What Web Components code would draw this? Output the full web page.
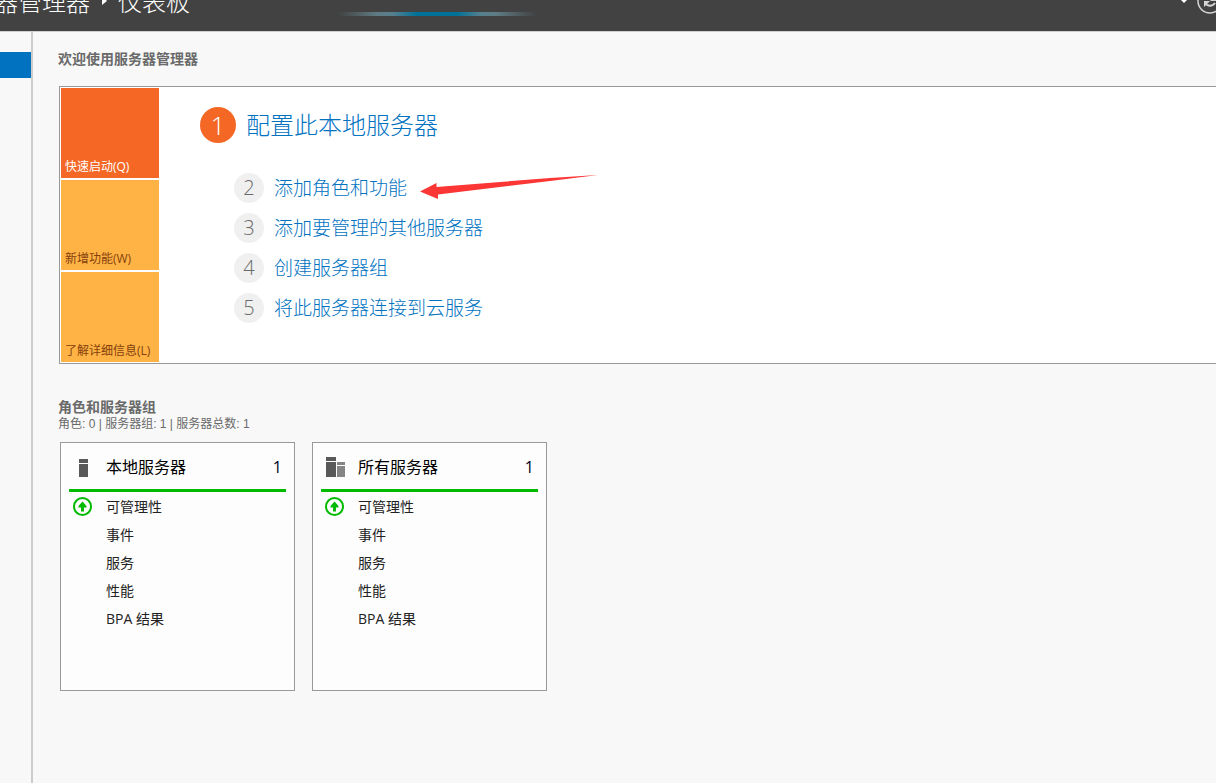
<!DOCTYPE html>
<html lang="zh-CN">
<head>
<meta charset="utf-8">
<title>服务器管理器</title>
<style>
html, body { height: 100%; margin: 0; }
body { font-family: "Open Sans", "Noto Sans CJK SC", sans-serif; background: #f8f8f8; overflow: hidden; }
</style>
</head>
<body>
<server-manager></server-manager>
<script>
function define(name, html, setup) {
  const template = document.createElement('template');
  template.innerHTML = html;
  customElements.define(name, class extends HTMLElement {
    constructor() {
      super();
      this.attachShadow({ mode: 'open' }).append(template.content.cloneNode(true));
    }
    connectedCallback() { if (setup) setup(this, this.shadowRoot); }
  });
}

define('app-header', `
<style>
:host { display: flex; justify-content: space-between; height: 32px; background: #424242; border-bottom: 1px solid #d0d0d0; box-sizing: border-box; overflow: hidden; position: relative; color: #fff; }
nav { display: flex; align-items: center; height: 24px; margin: -10px 0 0 -6px; font-size: 24px; line-height: 24px; font-weight: 300; white-space: nowrap; }
a { color: inherit; text-decoration: none; }
nav svg { width: 28px; height: 24px; }
.progress { position: absolute; left: 338px; top: 12px; width: 198px; height: 4px; background: linear-gradient(90deg, #42424200, #5f7b84 20%, #557f8d 28%, #007297 40%, #007297 60%, #557f8d 72%, #5f7b84 80%, #42424200); }
.tools { display: flex; margin: -12px -7px 0 0; height: 25px; align-items: center; }
button { border: 0; padding: 0; background: none; width: 26px; height: 26px; }
button svg { display: block; }
</style>
<nav aria-label="导航"><a href="#">器管理器</a><svg viewBox="0 0 28 24" aria-hidden="true"><path d="M12 6v9l5-4z" fill="#fff"/></svg><a href="#">仪表板</a></nav>
<div class="progress" role="progressbar" aria-label="刷新"></div>
<div class="tools">
<button aria-label="菜单"><svg width="26" height="26" viewBox="0 0 26 26"><path d="M7 9h12l-6 6z" fill="#fff"/></svg></button>
<button aria-label="刷新仪表板"><svg width="26" height="26" viewBox="0 0 26 26" fill="none"><circle cx="13" cy="13" r="12" stroke="#d4d4d4" stroke-width="1.500"/><path d="M18 11a6 6 0 0 0-11 0M8 15a6 6 0 0 0 10 0" stroke="#d4d4d4" stroke-width="2"/><path d="M7 13h6l-6 6zM19 13h-6l6-6z" fill="#d4d4d4"/></svg></button>
</div>`);

define('side-nav', `
<style>
:host { display: block; box-sizing: border-box; width: 33px; border-right: 2px solid #ccc; padding-top: 20px; }
a { display: block; height: 26px; background: #0072bf; }
</style>
<nav aria-label="侧栏"><a href="#" aria-label="仪表板" aria-current="page"></a></nav>`);

define('action-tile', `
<style>
:host { display: block; }
button { display: flex; align-items: flex-end; width: 98px; height: 90px; border: 0; padding: 0 4px 3px; background: #ffb344; color: #843f0d; font: inherit; font-size: 12px; line-height: 16px; white-space: nowrap; }
:host([active]) button { background: #f56724; color: #fff; }
</style>
<button><slot></slot></button>`);

define('quick-step', `
<style>
:host { display: flex; align-items: center; gap: 10px; padding-left: 34px; height: 40px; font-size: 19px; font-weight: 300; }
.n { display: grid; place-items: center; width: 30px; height: 30px; border-radius: 50%; background: #f0f0f0; color: #6a6a6a; font-size: 20px; line-height: 30px; }
a { color: #0072bf; text-decoration: none; white-space: nowrap; line-height: 28px; }
:host([primary]) { padding-left: 0; height: 36px; font-size: 24px; margin-bottom: 25px; }
:host([primary]) .n { width: 36px; height: 36px; background: #f56724; color: #fff; font-size: 26px; line-height: 36px; }
</style>
<span class="n"></span><a href="#"><slot></slot></a>`,
(el, root) => { root.querySelector('.n').textContent = el.getAttribute('number'); });

define('pointer-arrow', `
<style>
:host { position: absolute; left: 360px; top: 87px; width: 180px; height: 28px; pointer-events: none; }
svg { display: block; }
</style>
<svg width="180" height="28" viewBox="0 0 180 28" aria-hidden="true"><path d="M0 17.500L16.500 9V13L130 4L178 1L130 7L18 20.500V25z" fill="#fc3535"/></svg>`);

define('welcome-panel', `
<style>
:host { display: flex; position: relative; background: #fff; border: 1px solid #999; border-right: 0; padding: 1px; }
.tiles { display: flex; flex-direction: column; gap: 2px; }
.steps { flex: 1; padding: 19px 0 0 41px; }
</style>
<div class="tiles"><slot name="tile"></slot></div>
<div class="steps"><slot></slot></div>
<slot name="mark"></slot>`);

const localIcon = '<svg width="28" height="22" viewBox="0 0 28 22" aria-hidden="true"><path d="M10 2h9v4h-9zM10 7h9v13h-9z" fill="#595959"/></svg>';
const allIcon = '<svg width="28" height="22" viewBox="0 0 28 22" aria-hidden="true"><path d="M5 0h10v4H5zM5 5h10v15H5z" fill="#595959"/><path d="M16 5h8v3h-8zM16 9h8v11h-8z" fill="#858585"/></svg>';

define('group-card', `
<style>
:host { display: block; box-sizing: border-box; width: 235px; height: 249px; border: 1px solid #999; background: #fdfdfd; padding: 0 8px; color: #222; }
header { display: flex; align-items: center; height: 46px; padding-top: 0; border-bottom: 3px solid #00ba00; color: #000; padding-right: 4px; }
.icon { width: 37px; height: 22px; }
.icon svg { display: block; margin-top: 2px; }
h3 { flex: 1; margin: 0; font-size: 16px; line-height: 24px; font-weight: 400; }
h3, .count { padding-top: 2px; }
.count { font-size: 16px; line-height: 24px; color: #002; }
ul { list-style: none; margin: 1px 0 0; padding: 0; font-size: 14px; line-height: 28px; }
li { display: flex; align-items: center; height: 28px; }
li > span { width: 37px; }
li svg { display: block; margin-left: 4px; }
a { color: inherit; text-decoration: none; }
</style>
<header><span class="icon"></span><h3><slot></slot></h3><span class="count"></span></header>
<ul>
<li><span><svg width="20" height="20" viewBox="0 0 20 20" aria-hidden="true"><circle cx="9.500" cy="9.500" r="8.500" fill="none" stroke="#00ba00" stroke-width="2"/><path d="M9.500 4.500l4 4.500v1.500h-2.500v4h-3v-4H5.500V9z" fill="#00ba00"/></svg></span><a href="#">可管理性</a></li>
<li><span></span><a href="#">事件</a></li>
<li><span></span><a href="#">服务</a></li>
<li><span></span><a href="#">性能</a></li>
<li><span></span><a href="#">BPA 结果</a></li>
</ul>`,
(el, root) => {
  root.querySelector('.icon').innerHTML = el.getAttribute('kind') === 'all' ? allIcon : localIcon;
  root.querySelector('.count').textContent = el.getAttribute('count');
});

define('server-manager', `
<style>
:host { display: flex; flex-direction: column; min-height: 100%; height: 100%; }
.body { flex: 1; display: flex; }
main { flex: 1; min-width: 0; padding: 17px 0 0 25px; }
h2 { margin: 0; font-size: 14px; line-height: 20px; font-weight: 700; color: #6a6a6a; }
welcome-panel { margin: 17px 0 0 1px; }
.groups { margin-top: 33px; }
p { margin: 0; font-family: "Liberation Sans", "Noto Sans CJK SC", sans-serif; font-size: 12px; line-height: 14px; color: #6a6a6a; }
.cards { display: flex; flex-wrap: wrap; gap: 17px; margin: 11px 0 0 2px; }
</style>
<app-header></app-header>
<div class="body">
<side-nav></side-nav>
<main>
<h2>欢迎使用服务器管理器</h2>
<welcome-panel>
<action-tile slot="tile" active>快速启动(Q)</action-tile>
<action-tile slot="tile">新增功能(W)</action-tile>
<action-tile slot="tile">了解详细信息(L)</action-tile>
<quick-step primary number="1">配置此本地服务器</quick-step>
<quick-step number="2">添加角色和功能</quick-step>
<quick-step number="3">添加要管理的其他服务器</quick-step>
<quick-step number="4">创建服务器组</quick-step>
<quick-step number="5">将此服务器连接到云服务</quick-step>
<pointer-arrow slot="mark"></pointer-arrow>
</welcome-panel>
<section class="groups">
<h2>角色和服务器组</h2>
<p>角色: 0 | 服务器组: 1 | 服务器总数: 1</p>
<div class="cards">
<group-card kind="local" count="1">本地服务器</group-card>
<group-card kind="all" count="1">所有服务器</group-card>
</div>
</section>
</main>
</div>`);
</script>
</body>
</html>
